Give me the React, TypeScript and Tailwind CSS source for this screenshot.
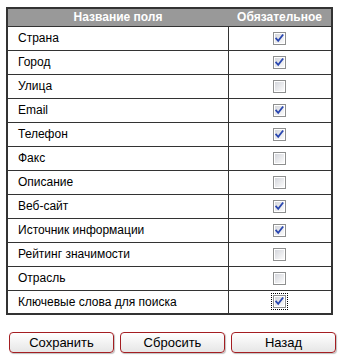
const fields: { name: string; checked: boolean }[] = [
  { name: "Страна", checked: true },
  { name: "Город", checked: true },
  { name: "Улица", checked: false },
  { name: "Email", checked: true },
  { name: "Телефон", checked: true },
  { name: "Факс", checked: false },
  { name: "Описание", checked: false },
  { name: "Веб-сайт", checked: true },
  { name: "Источник информации", checked: true },
  { name: "Рейтинг значимости", checked: false },
  { name: "Отрасль", checked: false },
  { name: "Ключевые слова для поиска", checked: true },
];

const CheckBox = ({ checked, focused }: { checked: boolean; focused?: boolean }) => {
  return (
    <span
      className={`inline-flex items-center justify-center ${
        focused ? "outline outline-1 outline-dotted outline-black outline-offset-1" : ""
      }`}
    >
      <svg width="13" height="13" viewBox="0 0 13 13">
        <defs>
          <linearGradient id="cbg" x1="0" y1="0" x2="1" y2="1">
            <stop offset="0" stopColor="#d4d6dc" />
            <stop offset="1" stopColor="#fbfbfb" />
          </linearGradient>
        </defs>
        <rect x="0.5" y="0.5" width="12" height="12" fill="#fff" stroke="#8e8f8f" />
        <rect x="2" y="2" width="9" height="9" fill="url(#cbg)" />
        {checked && (
          <path
            d="M3.2 6.6 L5.2 8.8 L9.6 3.2"
            fill="none"
            stroke="#2a47b0"
            strokeWidth="1.8"
            strokeLinecap="square"
          />
        )}
      </svg>
    </span>
  );
};

const Button = ({ label }: { label: string }) => (
  <button className="h-[21px] w-[105px] rounded-[4px] border border-[#a41e22] bg-gradient-to-b from-white to-[#e6e6e6] text-[13px] leading-none text-black shadow-[1px_1px_1px_rgba(0,0,0,0.25)]">
    {label}
  </button>
);

export default function App() {
  return (
    <div className="h-[363px] w-[344px] bg-white pl-[6px] pt-[7px] font-['Liberation_Sans',Arial,sans-serif]">
      <table className="w-[327px] border-collapse border-2 border-[#333] text-[12px] leading-[14px]">
        <thead>
          <tr className="h-[18px] bg-[#999999] text-white">
            <th className="w-[221px] p-0 text-center font-bold">Название поля</th>
            <th className="p-0 text-center font-bold">Обязательное</th>
          </tr>
        </thead>
        <tbody>
          {fields.map((f, i) => (
            <tr key={f.name} className="h-[24px] border-t border-[#333]">
              <td className="border-r border-[#333] pl-[10px] text-black">{f.name}</td>
              <td className="text-center align-middle">
                <div className="flex items-center justify-center">
                  <CheckBox checked={f.checked} focused={i === fields.length - 1} />
                </div>
              </td>
            </tr>
          ))}
        </tbody>
      </table>
      <div className="mt-[17px] flex gap-[6px] pl-[3px]">
        <Button label="Сохранить" />
        <Button label="Сбросить" />
        <Button label="Назад" />
      </div>
    </div>
  );
}
